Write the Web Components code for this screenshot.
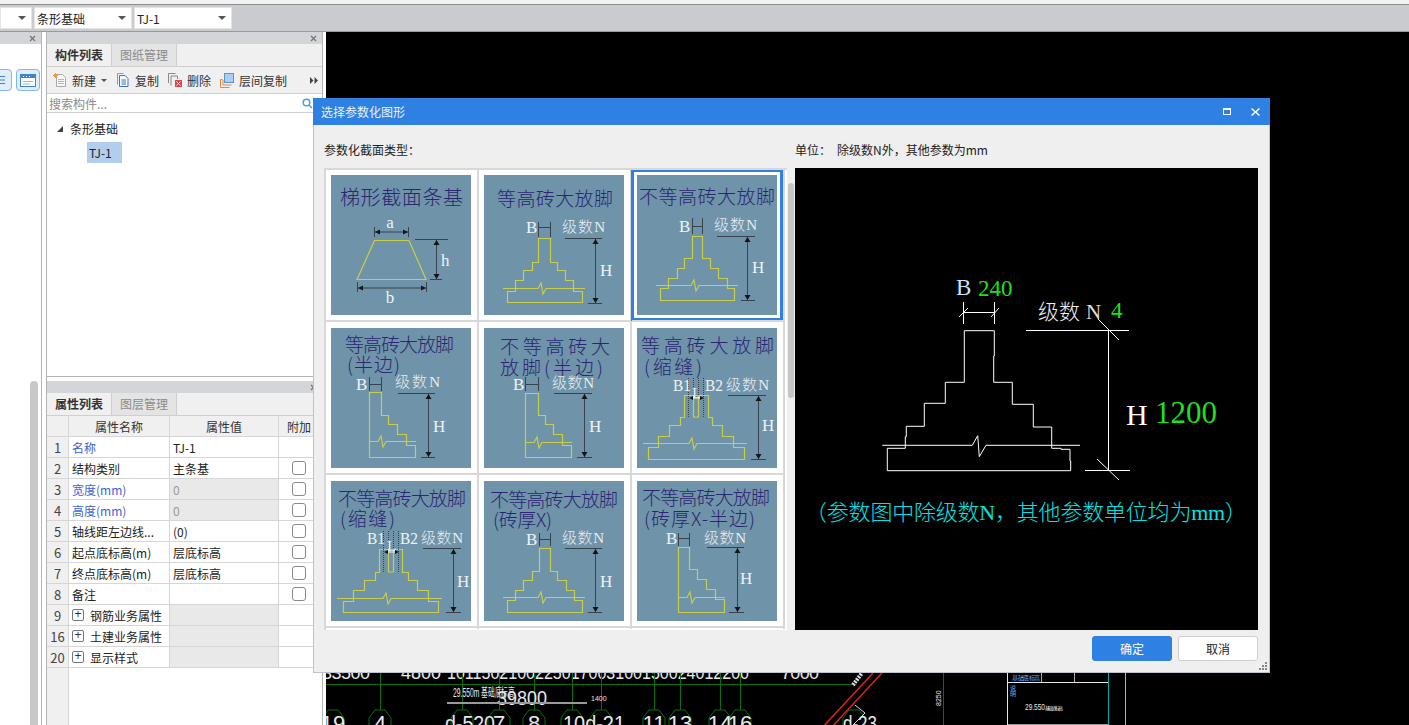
<!DOCTYPE html>
<html lang="zh-CN">
<head>
<meta charset="utf-8">
<title>选择参数化图形</title>
<style>
	html, body {
		margin: 0;
		height: 100%;
		overflow: hidden;
		background: #fff;
		font: 12px "Noto Sans CJK SC", "Liberation Sans", sans-serif;
		color: #222;
	}
</style>
</head>
<body>
<app-frame>
	<top-bar slot="bar"></top-bar>
	<left-docks slot="left"></left-docks>
	<cad-view slot="canvas"></cad-view>
	<param-dialog></param-dialog>
</app-frame>

<script>
const CJK = '"Noto Sans CJK SC", sans-serif';
const SERIF = '"Liberation Serif", "Noto Sans CJK SC", serif';

class AppFrame extends HTMLElement {
	connectedCallback() {
		this.attachShadow( { mode: 'open' } );
		this.shadowRoot.innerHTML = `
			<style>
			:host {
				display: grid;
				grid-template-rows: 32px 1fr;
				height: 100vh;
				position: relative;
				overflow: hidden;
			}
			.main {
				display: flex;
				min-height: 0;
			}
			</style>
			<slot name="bar"></slot>
			<div class="main">
				<slot name="left"></slot>
				<slot name="canvas"></slot>
			</div>
			<slot></slot>
		`;
	}
}

class ComboBox extends HTMLElement {
	connectedCallback() {
		this.attachShadow( { mode: 'open' } );
		this.shadowRoot.innerHTML = `
			<style>
			:host {
				display: flex;
				align-items: center;
				justify-content: space-between;
				box-sizing: border-box;
				height: 22px;
				padding: 0 5px 0 2px;
				background: #fff;
				border: 1px solid #e4e4e4;
				font-size: 12px;
				color: #222;
			}
			i {
				width: 0;
				height: 0;
				border: 4px solid transparent;
				border-top: 4px solid #555;
				border-bottom: 0;
			}
			</style>
			<span><slot></slot></span><i></i>
		`;
	}
}

class TopBar extends HTMLElement {
	connectedCallback() {
		this.attachShadow( { mode: 'open' } );
		this.shadowRoot.innerHTML = `
			<style>
			:host {
				display: block;
				height: 32px;
				box-sizing: border-box;
				background: #f2f2f2;
				padding-top: 4px;
			}
			.bar {
				box-sizing: border-box;
				height: 28px;
				background: #c9cbce;
				border-top: 1px solid #8c8c8c;
				border-bottom: 1px solid #9a9a9a;
				display: flex;
				gap: 2px;
				padding-top: 2px;
			}
			.first { width: 32px; }
			.item { width: 98px; }
			</style>
			<div class="bar">
				<combo-box class="first"></combo-box>
				<combo-box class="item">条形基础</combo-box>
				<combo-box class="item">TJ-1</combo-box>
			</div>
		`;
	}
}

class DockPanel extends HTMLElement {
	connectedCallback() {
		this.attachShadow( { mode: 'open' } );
		this.shadowRoot.innerHTML = `
			<style>
			:host {
				display: flex;
				flex-direction: column;
				box-sizing: border-box;
				min-height: 0;
				background: #fff;
				overflow: hidden;
			}
			.head {
				flex: none;
				height: 12px;
				background: #d3d5d8;
				display: flex;
				align-items: center;
				justify-content: flex-end;
				padding-right: 5px;
			}
			svg { display: block; }
			::slotted( * ) { flex: none; }
			</style>
			<div class="head">
				<svg width="7" height="7" viewBox="0 0 7 7"><path d="M1 1l5 5M6 1L1 6" stroke="#777" stroke-width="1.3" fill="none"/></svg>
			</div>
			<slot></slot>
		`;
	}
}

class TabStrip extends HTMLElement {
	connectedCallback() {
		const active = this.getAttribute( 'active' );
		const other = this.getAttribute( 'other' );
		this.attachShadow( { mode: 'open' } );
		this.shadowRoot.innerHTML = `
			<style>
			:host {
				display: flex;
				height: 23px;
				box-sizing: border-box;
				background: #f0f0f0;
				border-bottom: 1px solid #cfcfcf;
			}
			span {
				width: 64px;
				text-align: center;
				line-height: 22px;
				font-size: 12px;
			}
			.on {
				font-weight: 700;
				color: #333;
				border-right: 1px solid #cfcfcf;
			}
			.off {
				color: #8a8a8a;
				background: #e4e4e4;
				border-right: 1px solid #cfcfcf;
			}
			</style>
			<span class="on">${ active }</span><span class="off">${ other }</span>
		`;
	}
}

class ToolButton extends HTMLElement {
	connectedCallback() {
		const caret = this.hasAttribute( 'caret' );
		this.attachShadow( { mode: 'open' } );
		this.shadowRoot.innerHTML = `
			<style>
			:host {
				display: flex;
				align-items: center;
				gap: 5px;
				color: #333;
				font-size: 12px;
			}
			i {
				width: 0;
				height: 0;
				border: 3px solid transparent;
				border-top: 3px solid #555;
				border-bottom: 0;
			}
			</style>
			<slot name="icon"></slot><span><slot></slot></span>${ caret ? '<i></i>' : '' }
		`;
	}
}

class ComponentList extends HTMLElement {
	connectedCallback() {
		this.attachShadow( { mode: 'open' } );
		this.shadowRoot.innerHTML = `
			<style>
			:host {
				display: flex;
				flex-direction: column;
				flex: 1 !important;
				font-size: 12px;
			}
			.tools {
				height: 27px;
				box-sizing: border-box;
				background: #f0f0f0;
				border-bottom: 1px solid #cfcfcf;
				display: flex;
				align-items: center;
				gap: 9px;
				padding-left: 6px;
			}
			.more {
				margin-left: auto;
				margin-right: 4px;
			}
			.search {
				height: 19px;
				box-sizing: border-box;
				border-bottom: 1px solid #cfcfcf;
				display: flex;
				align-items: center;
				justify-content: space-between;
				padding: 0 9px 0 2px;
				color: #8a8a8a;
			}
			.tree {
				padding: 5px 0 0 10px;
				color: #222;
			}
			.node {
				display: flex;
				align-items: center;
				height: 21px;
				gap: 7px;
			}
			.arrow {
				width: 0;
				height: 0;
				border-left: 6px solid transparent;
				border-bottom: 6px solid #444;
			}
			.leaf {
				margin: 3px 0 0 30px;
				width: 35px;
				height: 21px;
				line-height: 21px;
				text-indent: 2px;
				background: #b3cdec;
			}
			svg { display: block; }
			</style>
			<div class="tools">
				<tool-button caret>
					<svg slot="icon" width="14" height="14" viewBox="0 0 14 14"><path d="M3.5 1.5h6l3 3v9h-9z" fill="#fafafa" stroke="#a8a8a8"/><path d="M5 6.5h6M5 8.5h6M5 10.5h6" stroke="#b5b5b5"/><path d="M2.5 0v5M0 2.5h5M.8.8l3.4 3.4M4.2.8L.8 4.2" stroke="#ee9a3c"/></svg>
					新建
				</tool-button>
				<tool-button>
					<svg slot="icon" width="14" height="14" viewBox="0 0 14 14"><path d="M1.5 11.5v-11h6" fill="none" stroke="#8a9cb0"/><path d="M3.5 2.5h5.5l3 3v8h-8.500z" fill="#f5f9fe" stroke="#3f78bb"/><path d="M5.500 7h4.500M5.500 9h4.500M5.500 11h4.500" stroke="#3f78bb"/></svg>
					复制
				</tool-button>
				<tool-button>
					<svg slot="icon" width="14" height="14" viewBox="0 0 14 14"><path d="M.5 10V.5h7M3 12.500V3h6.500v3" fill="none" stroke="#888"/><rect x="7" y="7" width="7" height="7" fill="#d8464b"/><path d="M8.500 8.500l4 4M12.500 8.500l-4 4" stroke="#fff"/></svg>
					删除
				</tool-button>
				<tool-button>
					<svg slot="icon" width="14" height="15" viewBox="0 0 14 15"><path d="M.5 14.500v-8h2M3 12h8.500M3 12V7" fill="none" stroke="#e8853c"/><path d="M.5 14.500h9" stroke="#e8853c"/><rect x="4.500" y=".5" width="9" height="9" fill="#a9cdf3" stroke="#5f93cb"/></svg>
					层间复制
				</tool-button>
				<svg class="more" width="8" height="7" viewBox="0 0 8 7"><path d="M0 0l3.500 3.500L0 7zM4.500 0L8 3.500 4.500 7z" fill="#444"/></svg>
			</div>
			<div class="search">
				<span>搜索构件...</span>
				<svg width="11" height="11" viewBox="0 0 11 11"><circle cx="4.500" cy="4.500" r="3.300" fill="none" stroke="#4f9fd8" stroke-width="1.500"/><path d="M7 7l3 3" stroke="#4f9fd8" stroke-width="1.500"/></svg>
			</div>
			<div class="tree">
				<div class="node"><span class="arrow"></span><span>条形基础</span></div>
				<div class="leaf">TJ-1</div>
			</div>
		`;
	}
}

const PROP_ROWS = [
	[ '1', '名称', 'TJ-1', 'link', false, false ],
	[ '2', '结构类别', '主条基', '', false, true ],
	[ '3', '宽度(mm)', '0', 'link', true, true ],
	[ '4', '高度(mm)', '0', 'link', true, true ],
	[ '5', '轴线距左边线...', '(0)', '', false, true ],
	[ '6', '起点底标高(m)', '层底标高', '', false, true ],
	[ '7', '终点底标高(m)', '层底标高', '', false, true ],
	[ '8', '备注', '', '', false, true ],
	[ '9', '钢筋业务属性', '', 'group', true, false ],
	[ '16', '土建业务属性', '', 'group', true, false ],
	[ '20', '显示样式', '', 'group', true, false ],
];

class PropTable extends HTMLElement {
	connectedCallback() {
		const rows = PROP_ROWS.map( ( [ num, name, value, kind, off, check ] ) => `
			<div class="c num">${ num }</div>
			<div class="c name ${ kind }">${ kind === 'group' ? '<b>+</b>' : '' }<span>${ name }</span></div>
			<div class="c val ${ off ? 'off' : '' }">${ value }</div>
			<div class="c add">${ check ? '<u></u>' : '' }</div>
		` ).join( '' );
		this.attachShadow( { mode: 'open' } );
		this.shadowRoot.innerHTML = `
			<style>
			:host {
				display: flex;
				flex-direction: column;
				flex: 1 !important;
				font-size: 12px;
				color: #222;
			}
			.grid {
				display: grid;
				grid-template-columns: 22px 101px 109px 44px;
				grid-auto-rows: 21px;
			}
			.c {
				box-sizing: border-box;
				border-right: 1px solid #d6d6d6;
				border-bottom: 1px solid #d6d6d6;
				display: flex;
				align-items: center;
				padding-left: 3px;
				white-space: nowrap;
				overflow: hidden;
			}
			.h {
				background: #f0f0f0;
				justify-content: center;
				padding: 0;
				color: #333;
			}
			.num {
				background: #f0f0f0;
				justify-content: center;
				padding: 0;
				color: #444;
				font-size: 13px;
			}
			.off {
				background: #e9e9e9;
				color: #999;
			}
			.link { color: #3b63d8; }
			.group b {
				flex: none;
				box-sizing: border-box;
				width: 12px;
				height: 12px;
				margin-right: 6px;
				border: 1px solid #777;
				border-radius: 2px;
				font: 400 12px/9px "Liberation Sans", sans-serif;
				text-align: center;
				color: #333;
			}
			.add {
				justify-content: flex-start;
				padding-left: 13px;
			}
			.add u {
				box-sizing: border-box;
				width: 14px;
				height: 14px;
				background: #fff;
				border: 1px solid #8a8a8a;
				border-radius: 3px;
			}
			.fill {
				flex: 1;
				width: 22px;
				background: #f0f0f0;
				border-right: 1px solid #d6d6d6;
				box-sizing: border-box;
			}
			</style>
			<div class="grid">
				<div class="c h"></div>
				<div class="c h">属性名称</div>
				<div class="c h">属性值</div>
				<div class="c h" style="justify-content:flex-start;padding-left:8px">附加</div>
				${ rows }
			</div>
			<div class="fill"></div>
		`;
	}
}

class LeftDocks extends HTMLElement {
	connectedCallback() {
		this.attachShadow( { mode: 'open' } );
		this.shadowRoot.innerHTML = `
			<style>
			:host {
				display: grid;
				grid-template-columns: 42px 277px;
				gap: 4px;
				width: 326px;
				flex: none;
				background: #fff;
			}
			.stub {
				border-right: 1px solid #b4b4b4;
			}
			.icons {
				display: flex;
				gap: 4px;
				margin: 25px 0 0 -12px;
			}
			.icons span {
				box-sizing: border-box;
				width: 24px;
				height: 22px;
				background: #e0edfa;
				border: 1px solid #84b6e8;
				border-radius: 4px;
				display: flex;
				align-items: center;
				justify-content: center;
			}
			.scroll {
				margin: auto 0 0 30px;
				width: 8px;
				height: 344px;
				background: #c8c8c8;
				border-radius: 4px 4px 0 0;
			}
			.col {
				display: flex;
				flex-direction: column;
				gap: 4px;
				min-height: 0;
				border-left: 1px solid #b4b4b4;
				border-right: 1px solid #b4b4b4;
			}
			.col dock-panel { height: 345px; }
			.col dock-panel:first-child { border-bottom: 1px solid #b4b4b4; }
			.col dock-panel:last-child {
				height: 344px;
			}
			</style>
			<dock-panel class="stub">
				<div class="icons">
					<span><svg width="12" height="12" viewBox="0 0 12 12"><path d="M1 2.500h10M1 6h10M1 9.500h10" stroke="#3f84cf"/></svg></span>
					<span><svg width="16" height="13" viewBox="0 0 16 13"><rect x=".5" y=".5" width="15" height="12" fill="#fff" stroke="#3f84cf"/><rect x="1" y="1" width="14" height="3" fill="#3f84cf"/><path d="M3 2.500h1M6 2.500h1M9 2.500h1" stroke="#fff"/><path d="M3 7.500h10M3 10h7" stroke="#8fb9e6"/></svg></span>
				</div>
				<div class="scroll"></div>
			</dock-panel>
			<div class="col">
				<dock-panel>
					<tab-strip active="构件列表" other="图纸管理"></tab-strip>
					<component-list></component-list>
				</dock-panel>
				<dock-panel>
					<tab-strip active="属性列表" other="图层管理"></tab-strip>
					<prop-table></prop-table>
				</dock-panel>
			</div>
		`;
	}
}

class CadView extends HTMLElement {
	connectedCallback() {
		const axes = [ 380, 462, 499, 534, 572, 601, 654, 680, 720, 740 ];
		const verticals = axes.map( ( x ) => `<path d="M${ x }.5 673V710"/>` ).join( '' );
		const bubbles = [ [ 333, '19' ], [ 380, '4' ], [ 462, '' ], [ 499, '7' ], [ 534, '8' ], [ 572, '' ], [ 601, '' ], [ 654, '11' ], [ 680, '13' ], [ 720, '14' ], [ 740, '16' ], [ 854, '' ] ];
		const octagon = ( x ) => `<path d="M${ x - 5 } 710H${ x + 5 }L${ x + 11 } 718V732H${ x - 11 }V718Z"/>`;
		const circles = bubbles.map( ( [ x ] ) => octagon( x ) ).join( '' );
		const labels = bubbles.filter( ( b ) => b[ 1 ] ).map( ( [ x, t ] ) => `<text x="${ x }" y="731" text-anchor="middle">${ t }</text>` ).join( '' );
		this.attachShadow( { mode: 'open' } );
		this.shadowRoot.innerHTML = `
			<style>
			:host {
				display: block;
				flex: 1;
				background: #000;
				overflow: hidden;
			}
			svg { display: block; }
			text { font-family: "Liberation Sans", sans-serif; fill: #e8e8e8; }
			</style>
			<svg width="1083" height="693" viewBox="326 32 1083 693">
				<g font-size="18">
					<text x="322" y="679" textLength="48">33500</text>
					<text x="401" y="679" textLength="40">4800</text>
					<text x="447" y="679" textLength="302" lengthAdjust="spacingAndGlyphs">1011502100225017003100150024012200</text>
					<text x="781" y="679" textLength="38">7000</text>
				</g>
				<path d="M326 684.500H852" stroke="#0a6e0a" fill="none"/>
				<g stroke="#0a6e0a" fill="none">${ verticals }${ circles }<path d="M943.500 673V725"/></g>
				<g font-size="22">${ labels }</g>
				<text x="453" y="697" font-size="12" textLength="62" lengthAdjust="spacingAndGlyphs">29.550m 基础底标高</text>
				<text x="497" y="705" font-size="20" textLength="50" lengthAdjust="spacingAndGlyphs">39800</text>
				<path d="M447 703H587" stroke="#9a9a9a" stroke-width="2"/>
				<text x="591" y="701" font-size="7">1400</text>
				<text x="445" y="731" font-size="22" textLength="50" lengthAdjust="spacingAndGlyphs">d-520</text>
				<text x="563" y="731" font-size="22" textLength="62" lengthAdjust="spacingAndGlyphs">10d-21</text>
				<text x="843" y="731" font-size="22" textLength="34" lengthAdjust="spacingAndGlyphs">d-23</text>
				<path d="M882 673L829 730M873 673L820 730" stroke="#e02020" stroke-width="1.500" fill="none"/>
				<path d="M853 685L862 673" stroke="#ddd" stroke-width="4" stroke-dasharray="2 1"/>
				<path d="M855 705l10 8-12 12" stroke="#ddd" fill="none"/>
				<text x="941" y="706" font-size="7" transform="rotate(-90 941 706)">8250</text>
				<path d="M1007.500 673V725M1007 682.500H1108" stroke="#e6e6e6" fill="none"/>
				<path d="M1041.500 673V682M1074.500 673V682" stroke="#aaa" fill="none"/>
				<path d="M1108.500 673V725" stroke="#00a8a8" fill="none"/>
				<path d="M1125.500 673V725" stroke="#b0b0b0" fill="none"/>
				<path d="M1008 724.500H1108" stroke="#999" fill="none"/>
				<text x="1012" y="680" font-size="6" textLength="28" style="fill:#6fa8e8">基础底标高</text>
				<text x="1010" y="690" font-size="6" style="fill:#6fa8e8">说</text>
				<text x="1010" y="696" font-size="6" style="fill:#6fa8e8">明</text>
				<text x="1025" y="710" font-size="9" textLength="20" lengthAdjust="spacingAndGlyphs">29.550</text>
				<text x="1045" y="710" font-size="5" textLength="18">基础底标高</text>
			</svg>
		`;
	}
}

// thumbnail geometry, all in the 140x140 space of the picture
const THUMBS = [
	{
		title: [ [ 13, 31, 116, '等高砖大放脚' ] ],
		shape: '54,63 66,63 66,87 73,87 73,95 81,95 81,105 89,105 89,116 98,116 98,127 23,127 23,116 31,116 31,105 39,105 39,95 48,95 48,87 54,87',
		brk: [ 19, 101, 54, 113 ],
		b: [ 42, 58, 54, 66, 47, 62, 52 ], n: [ 78, 57, 43 ],
		top: [ 81, 118, 63 ], v: 111, bottom: [ 104, 118, 128 ], h: [ 116, 101 ],
	},
	{
		title: [ [ 2, 29, 136, '不等高砖大放脚' ] ],
		shape: '55,61 65,61 65,83 73,83 73,93 81,93 81,103 90,103 90,113 97,113 97,125 23,125 23,113 31,113 31,103 40,103 40,93 47,93 47,83 55,83',
		brk: [ 19, 101, 54, 110 ],
		b: [ 42, 57, 55, 65, 43, 59, 51 ], n: [ 77, 55, 43 ],
		top: [ 80, 118, 61 ], v: 110, bottom: [ 104, 118, 125 ], h: [ 115, 98 ],
	},
	{
		title: [ [ 14, 24, 109, '等高砖大放脚' ], [ 16, 44, 53, '(半边)' ] ],
		shape: '38,64 50,64 50,87 57,87 57,96 66,96 66,106 75,106 75,117 84,117 84,129 38,129',
		brk: [ 38, 85, 47, 113 ],
		b: [ 25, 62, 38, 50, 49, 63, 56 ], n: [ 64, 59, 45 ],
		top: [ 67, 104, 65 ], v: 97, bottom: [ 90, 104, 129 ], h: [ 102, 104 ],
	},
	{
		title: [ [ 16, 26, 110, '不等高砖大' ], [ 16, 47, 103, '放脚(半边)' ] ],
		shape: '41,65 54,65 54,87 61,87 61,96 69,96 69,106 78,106 78,117 87,117 87,129 41,129',
		brk: [ 41, 88, 50, 114 ],
		b: [ 29, 62, 41, 54, 49, 63, 56 ], n: [ 68, 60, 42 ],
		top: [ 70, 108, 65 ], v: 100, bottom: [ 93, 108, 129 ], h: [ 105, 104 ],
	},
	{
		title: [ [ 4, 25, 133, '等高砖大放脚' ], [ 7, 46, 58, '(缩缝)' ] ],
		shape: '47,67 71,67 71,89 75,89 75,97 85,97 85,108 96,108 96,119 107,119 107,131 11,131 11,119 21,119 21,108 32,108 32,97 43,97 43,89 47,89',
		brk: [ 6, 110, 52, 115 ],
		slot: [ 56, 61, 67, 89, 51, 66, 59, 70 ],
		b2: [ 36, 63, 68 ], n: [ 89, 62, 43 ],
		top: [ 91, 129, 67 ], v: 121, bottom: [ 114, 129, 131 ], h: [ 125, 103 ],
	},
	{
		title: [ [ 7, 25, 128, '不等高砖大放脚' ], [ 9, 45, 55, '(缩缝)' ] ],
		shape: '48,68 71,68 71,91 77,91 77,99 86,99 86,109 97,109 97,120 107,120 107,131 12,131 12,120 22,120 22,109 33,109 33,99 44,99 44,91 48,91',
		brk: [ 6, 111, 52, 117 ],
		slot: [ 57, 62, 68, 91, 52, 67, 60, 71 ],
		b2: [ 36, 63, 69 ], n: [ 90, 62, 42 ],
		top: [ 92, 130, 67 ], v: 122, bottom: [ 115, 130, 131 ], h: [ 126, 106 ],
	},
	{
		title: [ [ 6, 26, 128, '不等高砖大放脚' ], [ 9, 46, 59, '(砖厚X)' ] ],
		shape: '55,67 66,67 66,90 73,90 73,99 82,99 82,109 90,109 90,119 98,119 98,131 23,131 23,119 31,119 31,109 39,109 39,99 48,99 48,90 55,90',
		brk: [ 19, 101, 54, 116 ],
		b: [ 42, 64, 55, 66, 52, 65, 58 ], n: [ 78, 62, 42 ],
		top: [ 81, 118, 67 ], v: 111, bottom: [ 104, 118, 131 ], h: [ 116, 106 ],
	},
	{
		title: [ [ 5, 24, 128, '不等高砖大放脚' ], [ 7, 45, 111, '(砖厚X-半边)' ] ],
		shape: '41,66 52,66 52,88 60,88 60,98 69,98 69,108 78,108 78,118 87,118 87,131 41,131',
		brk: [ 41, 88, 50, 116 ],
		b: [ 29, 63, 41, 52, 52, 65, 57 ], n: [ 67, 62, 42 ],
		top: [ 70, 107, 66 ], v: 100, bottom: [ 92, 107, 131 ], h: [ 103, 103 ],
	},
];

class SectionThumb extends HTMLElement {
	connectedCallback() {
		const kind = this.getAttribute( 'kind' );
		const body = kind === 'trapezoid' ? this.trapezoid() : this.footing( THUMBS[ Number( kind ) ] );
		this.attachShadow( { mode: 'open' } );
		this.shadowRoot.innerHTML = `
			<style>
			:host {
				display: block;
				width: 140px;
				height: 140px;
				background: #6f93a9;
			}
			svg { display: block; }
			.title { font: 19px ${ CJK }; font-weight: 300; fill: #2a2672; }
			.latin { font: 17px ${ SERIF }; fill: #eef3f6; }
			.grade { font: 15px ${ SERIF }; fill: #e6ecf0; }
			.yellow { fill: none; stroke: #c9cd4c; stroke-width: 1.2; }
			.dark { fill: none; stroke: #38424c; stroke-width: 1; }
			.tip { fill: #151515; }
			</style>
			<svg width="140" height="140" viewBox="0 0 140 140">${ body }</svg>
		`;
	}
	vArrow( x, y1, y2 ) {
		return `<path class="dark" d="M${ x } ${ y1 }V${ y2 }"/>
			<path class="tip" d="M${ x } ${ y1 }l-3 5h6zM${ x } ${ y2 }l-3 -5h6z"/>`;
	}
	trapezoid() {
		return `
			<text class="title" x="9" y="30" textLength="123" style="font-size:20px">梯形截面条基</text>
			<text class="latin" x="59" y="53" text-anchor="middle" style="font-size:17px">a</text>
			<path class="dark" d="M43.500 52V62M77.500 52V62M44 57H77" stroke-width="2"/>
			<path class="tip" d="M44 57l5 -2.500v5zM77 57l-5 -2.500v5z"/>
			<path class="yellow" d="M43.500 65.500H78L95 104.500H26Z"/>
			<path class="dark" d="M84 64.500H117M99 104.500H111"/>
			${ this.vArrow( 105.5, 65, 104 ) }
			<text class="latin" x="110" y="91" style="font-size:17px">h</text>
			<path class="dark" d="M26.500 107V117M95.500 107V117M27 113H95"/>
			<path class="tip" d="M27 113l5 -2.500v5zM95 113l-5 -2.500v5z"/>
			<text class="latin" x="59" y="128" text-anchor="middle" style="font-size:17px">b</text>
		`;
	}
	footing( t ) {
		const titles = t.title.map( ( [ x, y, len, s ] ) => `<text class="title" x="${ x }" y="${ y }" textLength="${ len }">${ s }</text>` ).join( '' );
		const [ x0, x1, c, y ] = t.brk;
		const brk = `M${ x0 } ${ y }.5H${ c }L${ c + 3 } ${ y - 5 }L${ c + 5 } ${ y + 6 }L${ c + 8 } ${ y }.5H${ x1 }`;
		let marks = '';
		if ( t.b ) {
			const [ lx, base, a, b, y1, y2, cy ] = t.b;
			marks = `<text class="latin" x="${ lx }" y="${ base }">B</text>
				<path class="dark" d="M${ a }.5 ${ y1 }V${ y2 }M${ b }.5 ${ y1 }V${ y2 }M${ a } ${ cy }.5H${ b }"/>`;
		}
		if ( t.slot ) {
			const [ a, b, y1, y2, d1, d2, lx, ay ] = t.slot;
			const [ b1, base, b2 ] = t.b2;
			marks = `<path class="yellow" d="M${ a }.5 ${ y1 }V${ y2 }H${ b }.5V${ y1 }"/>
				<path class="dark" stroke-dasharray="1 1" d="M${ d1 }.5 50V${ y2 }M${ d2 }.5 50V${ y2 }M${ a }.5 50V${ y1 }M${ b }.5 50V${ y1 }"/>
				<text class="latin" x="${ b1 }" y="${ base }" textLength="18" lengthAdjust="spacingAndGlyphs">B1</text>
				<text class="latin" x="${ b2 }" y="${ base }" textLength="18" lengthAdjust="spacingAndGlyphs">B2</text>
				<text class="latin" x="${ lx - 4 }" y="${ base + 7 }" style="font-size:15px">L</text>
				<path d="M${ lx - 6 } ${ ay }H${ lx + 7 }" stroke="#eef3f6"/>
				<path class="tip" d="M${ lx - 7 } ${ ay }l4 -2v4zM${ lx + 8 } ${ ay }l-4 -2v4z"/>`;
		}
		const [ nx, nBase, nLen ] = t.n;
		const [ tx1, tx2, ty ] = t.top;
		const [ bx1, bx2, by ] = t.bottom;
		const [ hx, hBase ] = t.h;
		return `
			${ titles }
			<polygon class="yellow" points="${ t.shape }" transform="translate(.5 .5)"/>
			<path class="yellow" d="${ brk }"/>
			${ marks }
			<text class="grade" x="${ nx }" y="${ nBase }" textLength="${ nLen }"><tspan style="font-family:${ CJK.replace( /"/g, "'" ) };font-weight:300">级数</tspan>N</text>
			<path class="dark" d="M${ tx1 } ${ ty }.5H${ tx2 }M${ bx1 } ${ by }.5H${ bx2 }"/>
			${ this.vArrow( t.v + 0.5, ty + 1, by ) }
			<text class="latin" x="${ hx }" y="${ hBase }">H</text>
		`;
	}
}

class SectionGrid extends HTMLElement {
	connectedCallback() {
		const kinds = [ 'trapezoid', 0, 1, 2, 3, 4, 5, 6, 7 ];
		const cells = kinds.map( ( k, i ) => `
			<div class="cell ${ i === 2 ? 'sel' : '' }"><section-thumb kind="${ k }"></section-thumb></div>
		` ).join( '' );
		this.attachShadow( { mode: 'open' } );
		this.shadowRoot.innerHTML = `
			<style>
			:host {
				display: flex;
				justify-content: space-between;
				background: #f0f0f0;
				height: 462px;
				overflow: hidden;
			}
			.list {
				width: 463px;
				box-sizing: border-box;
				background: #fff;
				border-left: 2px solid #d8d8d8;
				border-top: 2px solid #d8d8d8;
				display: grid;
				grid-template-columns: repeat( 3, 153px );
				grid-auto-rows: 153px;
				overflow: hidden;
			}
			.cell {
				box-sizing: border-box;
				width: 153px;
				height: 153px;
				position: relative;
				padding: 5px;
			}
			.cell::after {
				content: '';
				position: absolute;
				left: 151px;
				top: 0;
				width: 2px;
				height: 153px;
				background: #d8d8d8;
			}
			.cell::before {
				content: '';
				position: absolute;
				left: 0;
				top: 150px;
				width: 153px;
				height: 2px;
				background: #d8d8d8;
			}
			.sel section-thumb {
				outline: 3px solid #2e80e2;
				outline-offset: 3px;
			}
			.track {
				width: 8px;
				padding: 15px 0 0 1px;
				box-sizing: border-box;
			}
			.track div {
				height: 215px;
				width: 6px;
				background: #c6c6c6;
				border-radius: 3px;
			}
			</style>
			<div class="list">${ cells }</div>
			<div class="track"><div></div></div>
		`;
	}
}

class SectionPreview extends HTMLElement {
	connectedCallback() {
		// measured from the drawing at 3x, origin 860,260
		const z = ( list ) => list.map( ( [ x, y ] ) => `${ ( x / 3 + 860 ).toFixed( 1 ) },${ ( y / 3 + 260 ).toFixed( 1 ) }` ).join( ' ' );
		const outline = z( [ [ 313, 212 ], [ 403, 212 ], [ 403, 288 ], [ 401, 288 ], [ 401, 367 ], [ 457, 367 ], [ 457, 433 ], [ 520, 433 ], [ 520, 501 ], [ 575, 501 ], [ 575, 565 ], [ 603, 565 ], [ 603, 568 ], [ 630, 568 ], [ 630, 603 ], [ 632, 603 ], [ 632, 632 ], [ 82, 632 ], [ 82, 565 ], [ 136, 565 ], [ 136, 530 ], [ 139, 530 ], [ 139, 499 ], [ 193, 499 ], [ 193, 430 ], [ 256, 430 ], [ 256, 367 ], [ 313, 367 ], [ 313, 212 ] ] );
		const brk = z( [ [ 67, 556 ], [ 337, 556 ], [ 353, 527 ], [ 358, 590 ], [ 378, 556 ], [ 660, 556 ] ] );
		this.attachShadow( { mode: 'open' } );
		this.shadowRoot.innerHTML = `
			<style>
			:host {
				display: block;
				width: 463px;
				height: 462px;
				background: #000;
			}
			svg { display: block; }
			polyline, path { fill: none; stroke: #fff; stroke-width: 1; }
			text { font-family: ${ SERIF.replace( /"/g, "'" ) }; }
			</style>
			<svg width="463" height="462" viewBox="795 168 463 462">
				<polyline points="${ outline }"/>
				<polyline points="${ brk }"/>
				<path d="M963.500 302V324M994.500 302V324M963 312.500H995M959 317L968 308M991 317L999 308"/>
				<path d="M1026 330.500H1129M1085 470.500H1130M1108.500 331V470M1098 319L1119 340M1097 459L1119 480"/>
				<text x="956" y="295" font-size="23" fill="#cfe0ff">B</text>
				<text x="978" y="296" font-size="23" fill="#1ee01e">240</text>
				<text x="1038" y="319" font-size="21" fill="#f0f0f0" style="font-family:'Noto Sans CJK SC',sans-serif;font-weight:300">级数</text>
				<text x="1086" y="319" font-size="21" fill="#e8d8c8">N</text>
				<text x="1111" y="318" font-size="23" fill="#1ee01e">4</text>
				<text x="1126" y="425" font-size="30" fill="#fff">H</text>
				<text x="1155" y="423" font-size="31" fill="#1ee01e">1200</text>
				<text x="805" y="520" font-size="22" fill="#00e4e4" textLength="442" style="font-weight:300">（参数图中除级数N，其他参数单位均为mm）</text>
			</svg>
		`;
	}
}

class ParamDialog extends HTMLElement {
	connectedCallback() {
		this.attachShadow( { mode: 'open' } );
		this.shadowRoot.innerHTML = `
			<style>
			:host {
				position: absolute;
				left: 313px;
				top: 98px;
				width: 957px;
				height: 575px;
				box-sizing: border-box;
				display: flex;
				flex-direction: column;
				background: #efefef;
				border: 1px solid #bcc3ce;
				border-top: 0;
				font-size: 12px;
				color: #222;
			}
			.title {
				flex: none;
				height: 27px;
				margin: 0 -1px;
				background: #2e80e2;
				color: #eaf3fd;
				display: flex;
				align-items: center;
				padding: 0 10px 0 8px;
				gap: 20px;
			}
			.title span { flex: 1; }
			svg { display: block; }
			.labels {
				display: grid;
				grid-template-columns: 471px 1fr;
				height: 43px;
				box-sizing: border-box;
				padding: 16px 0 0 10px;
				line-height: 18px;
			}
			.unit { display: flex; gap: 6px; }
			.body {
				display: grid;
				grid-template-columns: 471px 463px;
				margin-left: 10px;
			}
			.foot {
				flex: 1;
				display: flex;
				justify-content: flex-end;
				gap: 6px;
				padding: 6px 11px 0 0;
				position: relative;
			}
			button {
				width: 80px;
				height: 25px;
				box-sizing: border-box;
				border-radius: 3px;
				font: 12px ${ CJK };
				padding: 0;
			}
			.ok {
				background: #2e80e2;
				border: 1px solid #2e80e2;
				color: #fff;
			}
			.no {
				background: #fff;
				border: 1px solid #cfcfcf;
				color: #222;
			}
			.grip {
				position: absolute;
				right: 2px;
				bottom: 2px;
			}
			</style>
			<div class="title">
				<span>选择参数化图形</span>
				<svg width="8" height="8" viewBox="0 0 8 8"><rect x=".5" y=".5" width="7" height="6" fill="none" stroke="#fff"/><path d="M0 1h8" stroke="#fff" stroke-width="2"/></svg>
				<svg width="9" height="8" viewBox="0 0 9 8"><path d="M.5 .5l8 7M8.500 .5l-8 7" stroke="#fff" stroke-width="1.400"/></svg>
			</div>
			<div class="labels">
				<div>参数化截面类型：</div>
				<div class="unit"><span>单位：</span><span>除级数N外，其他参数为mm</span></div>
			</div>
			<div class="body">
				<section-grid></section-grid>
				<section-preview></section-preview>
			</div>
			<div class="foot">
				<button class="ok">确定</button>
				<button class="no">取消</button>
				<svg class="grip" width="8" height="8" viewBox="0 0 8 8" fill="#888"><rect x="6" y="0" width="2" height="2"/><rect x="3" y="3" width="2" height="2"/><rect x="6" y="3" width="2" height="2"/><rect x="0" y="6" width="2" height="2"/><rect x="3" y="6" width="2" height="2"/><rect x="6" y="6" width="2" height="2"/></svg>
			</div>
		`;
	}
}

window.customElements.define( 'combo-box', ComboBox );
window.customElements.define( 'tool-button', ToolButton );
window.customElements.define( 'dock-panel', DockPanel );
window.customElements.define( 'tab-strip', TabStrip );
window.customElements.define( 'component-list', ComponentList );
window.customElements.define( 'prop-table', PropTable );
window.customElements.define( 'section-thumb', SectionThumb );
window.customElements.define( 'section-grid', SectionGrid );
window.customElements.define( 'section-preview', SectionPreview );
window.customElements.define( 'top-bar', TopBar );
window.customElements.define( 'left-docks', LeftDocks );
window.customElements.define( 'cad-view', CadView );
window.customElements.define( 'param-dialog', ParamDialog );
window.customElements.define( 'app-frame', AppFrame );
</script>
</body>
</html>
